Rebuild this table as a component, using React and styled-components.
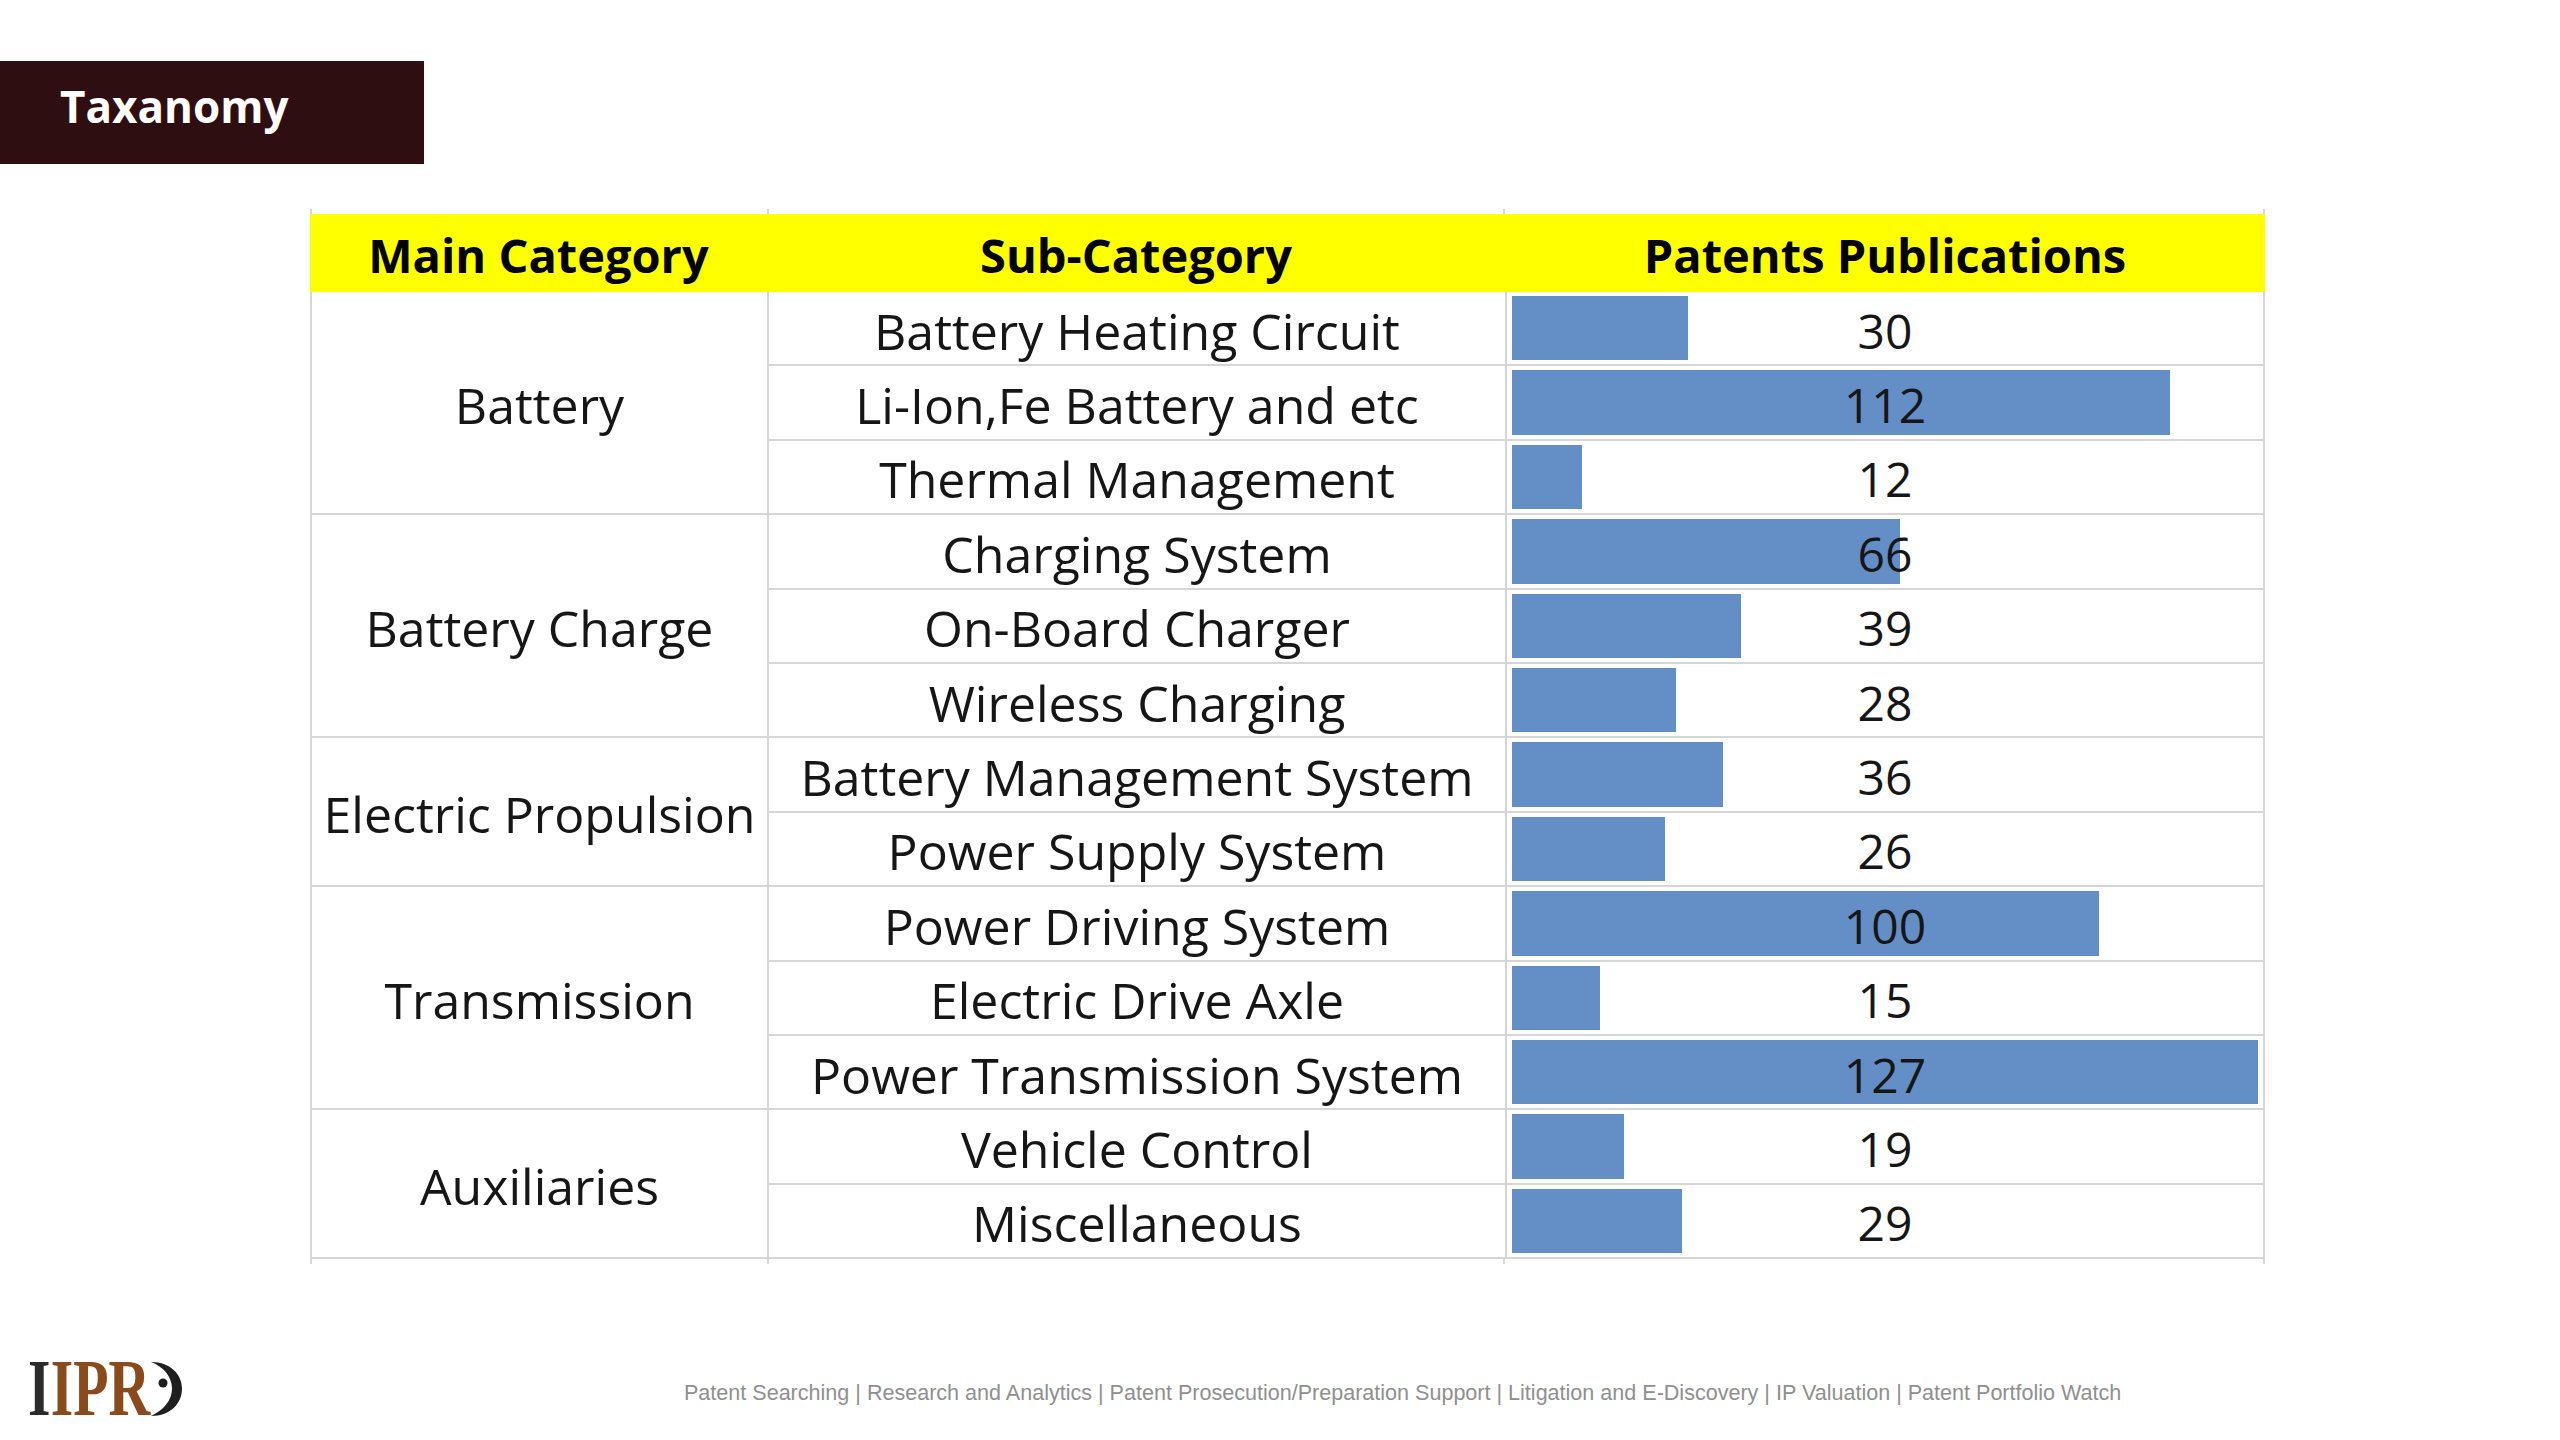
import React from "react";
import styled, { createGlobalStyle } from "styled-components";

const GlobalStyle = createGlobalStyle`
  html, body {
    margin: 0;
    padding: 0;
    background: #ffffff;
  }
  body {
    font-family: "Open Sans", "Noto Sans", sans-serif;
  }
  * { box-sizing: border-box; }
`;

const MAX = 127;

const groups = [
  {
    name: "Battery",
    rows: [
      ["Battery Heating Circuit", 30],
      ["Li-Ion,Fe Battery and etc", 112],
      ["Thermal Management", 12],
    ],
  },
  {
    name: "Battery Charge",
    rows: [
      ["Charging System", 66],
      ["On-Board Charger", 39],
      ["Wireless Charging", 28],
    ],
  },
  {
    name: "Electric Propulsion",
    rows: [
      ["Battery Management System", 36],
      ["Power Supply System", 26],
    ],
  },
  {
    name: "Transmission",
    rows: [
      ["Power Driving System", 100],
      ["Electric Drive Axle", 15],
      ["Power Transmission System", 127],
    ],
  },
  {
    name: "Auxiliaries",
    rows: [
      ["Vehicle Control", 19],
      ["Miscellaneous", 29],
    ],
  },
];

const GRID = "#d6d6d6";

const Page = styled.div`
  width: 2560px;
  height: 1440px;
  padding-top: 61px;
  display: flex;
  flex-direction: column;
  overflow: hidden;
`;

const TitleBar = styled.div`
  width: 424px;
  height: 103px;
  background: #2f0e11;
  display: flex;
  align-items: center;
  padding: 0 0 14px 60px;
`;

const Title = styled.h1`
  margin: 0;
  font-family: "Open Sans", "Lato", sans-serif;
  font-weight: 700;
  font-size: 44px;
  line-height: 1;
  color: #ffffff;
`;

const Table = styled.div`
  margin: 45px 0 0 310px;
  width: 1955px;
  display: flex;
  flex-direction: column;
`;

const Stubs = styled.div`
  display: grid;
  grid-template-columns: 457px 736px 762px;
  height: 5px;
`;

const Stub = styled.div`
  border-left: 2px solid ${GRID};
  border-right: ${(p) => (p.$last ? `2px solid ${GRID}` : "none")};
`;

const HeaderRow = styled.div`
  display: grid;
  grid-template-columns: 457px 738px 760px;
  height: 78px;
  background: #ffff00;
`;

const HeaderCell = styled.div`
  display: flex;
  align-items: center;
  justify-content: center;
  font-weight: 700;
  font-size: 47px;
  color: #000000;
  padding-top: 4px;
`;

const Body = styled.div`
  display: grid;
  grid-template-columns: 455px 736px 756px;
  grid-auto-rows: 72.4px;
  gap: 2px;
  padding: 0 2px 2px 2px;
  background: ${GRID};
`;

const Cell = styled.div`
  background: #ffffff;
  display: flex;
  align-items: center;
  justify-content: center;
  font-size: 50px;
  color: #161616;
  white-space: nowrap;
  line-height: 1;
  padding-top: 5px;
`;

const MainCell = styled(Cell)`
  grid-column: 1;
  grid-row: span ${(p) => p.$span};
`;

const SubCell = styled(Cell)`
  grid-column: 2;
`;

const BarCell = styled(Cell)`
  grid-column: 3;
  position: relative;
  font-size: 48px;
`;

const Bar = styled.div`
  position: absolute;
  left: 5px;
  top: 4px;
  bottom: 4px;
  background: #638ec6;
`;

const Value = styled.span`
  position: relative;
`;

const Footer = styled.div`
  margin-top: 89px;
  display: flex;
  align-items: center;
  height: 72px;
`;

const Logo = styled.svg`
  flex: none;
  display: block;
`;

const FooterText = styled.div`
  margin-left: 484px;
  margin-top: 8px;
  font-family: "Liberation Sans", Arial, sans-serif;
  font-size: 21.55px;
  color: #8f8f8f;
  white-space: nowrap;
`;

const serif = "'Liberation Serif', 'Times New Roman', serif";

const StubRow = () => (
  <Stubs>
    <Stub />
    <Stub />
    <Stub $last />
  </Stubs>
);

export default function App() {
  return (
    <>
      <GlobalStyle />
      <Page>
        <TitleBar>
          <Title>Taxanomy</Title>
        </TitleBar>
        <Table>
          <StubRow />
          <HeaderRow>
            <HeaderCell>Main Category</HeaderCell>
            <HeaderCell>Sub-Category</HeaderCell>
            <HeaderCell>Patents Publications</HeaderCell>
          </HeaderRow>
          <Body>
            {groups.map((g) =>
              g.rows.map(([sub, val], i) => (
                <React.Fragment key={g.name + sub}>
                  {i === 0 && <MainCell $span={g.rows.length}>{g.name}</MainCell>}
                  <SubCell>{sub}</SubCell>
                  <BarCell>
                    <Bar style={{ width: `calc((100% - 10px) * ${val / MAX})` }} />
                    <Value>{val}</Value>
                  </BarCell>
                </React.Fragment>
              ))
            )}
          </Body>
          <StubRow />
        </Table>
        <Footer>
          <Logo width="200" height="72" viewBox="0 0 200 72">
            <g
              transform="translate(28 62) scale(0.722 1)"
              fontFamily={serif}
              fontWeight="700"
              fontSize="80"
            >
              <text x="0" y="0" fill="#2b2b2b">I</text>
              <text x="31.5" y="0" fill="#8a4a1c">IPR</text>
            </g>
            <path
              d="M151 9 C171 9 182 22 182 35.5 C182 50 171 63 151 63 C164 57 172 47 172 35.5 C172 24 164 14 151 9 Z"
              fill="#1f1f1f"
            />
            <circle cx="163" cy="30" r="4.5" fill="#1f1f1f" />
          </Logo>
          <FooterText>
            Patent Searching | Research and Analytics | Patent Prosecution/Preparation Support | Litigation and E-Discovery | IP Valuation | Patent Portfolio Watch
          </FooterText>
        </Footer>
      </Page>
    </>
  );
}
